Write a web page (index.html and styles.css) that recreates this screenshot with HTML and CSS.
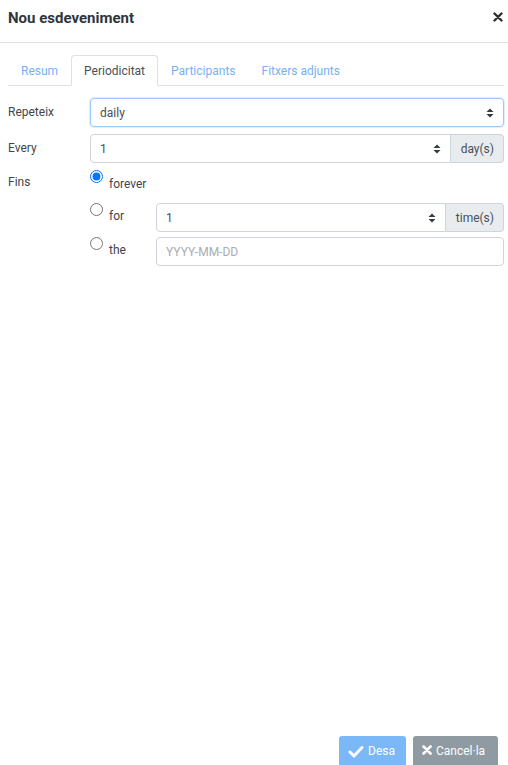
FILE: index.html
```html
<!DOCTYPE html>
<html lang="ca">
<head>
  <meta charset="UTF-8">
  <title>Nou esdeveniment</title>
  <link rel="stylesheet" href="styles.css">
</head>
<body>

<div class="modal">
  <!-- header -->
  <div class="modal-header">
    <h1>Nou esdeveniment</h1>
    <span class="close">
      <svg width="10" height="10" viewBox="0 0 10 10"><path d="M1.5 1.5 L8.5 8.5 M8.5 1.5 L1.5 8.5" stroke="#2b2f33" stroke-width="2.4" stroke-linecap="round"/></svg>
    </span>
  </div>

  <!-- body -->
  <div class="modal-body">
    <ul class="tabs">
      <li><a href="#">Resum</a></li>
      <li class="active"><a href="#">Periodicitat</a></li>
      <li><a href="#">Participants</a></li>
      <li><a href="#">Fitxers adjunts</a></li>
    </ul>

    <div class="form-row">
      <label class="col-label">Repeteix</label>
      <div class="col-field">
        <select class="select focus">
          <option>daily</option>
        </select>
      </div>
    </div>

    <div class="form-row">
      <label class="col-label">Every</label>
      <div class="col-field input-group">
        <select class="select">
          <option>1</option>
        </select>
        <span class="addon">day(s)</span>
      </div>
    </div>

    <div class="form-row">
      <label class="col-label fins">Fins</label>
      <div class="col-field">
        <div class="option first">
          <input type="radio" name="until" checked>
          <span class="opt-text">forever</span>
        </div>
        <div class="option">
          <input type="radio" name="until">
          <span class="opt-text short">for</span>
          <div class="input-group">
            <select class="select">
              <option>1</option>
            </select>
            <span class="addon">time(s)</span>
          </div>
        </div>
        <div class="option">
          <input type="radio" name="until">
          <span class="opt-text short">the</span>
          <input type="text" class="text-input" placeholder="YYYY-MM-DD">
        </div>
      </div>
    </div>
  </div>

  <!-- footer -->
  <div class="modal-footer">
    <button class="btn btn-primary">
      <svg width="16" height="13" viewBox="0 0 16 13"><path d="M2 7 L6 11 L14 2.5" fill="none" stroke="#fff" stroke-width="3" stroke-linejoin="round" stroke-linecap="round"/></svg>
      Desa
    </button>
    <button class="btn btn-secondary">
      <svg width="10" height="10" viewBox="0 0 10 10"><path d="M1.5 1.5 L8.5 8.5 M8.5 1.5 L1.5 8.5" stroke="#fff" stroke-width="2.6" stroke-linecap="round"/></svg>
      Cancel·la
    </button>
  </div>
</div>

</body>
</html>
```

FILE: styles.css
```css
* {
  box-sizing: border-box;
}
html, body {
  margin: 0;
  height: 100%;
}
body {
  font-family: Roboto, "Liberation Sans", sans-serif;
  font-size: 12px;
  color: #495057;
  background: #fff;
}
.modal {
  height: 100vh;
  display: flex;
  flex-direction: column;
  overflow: hidden;
}
.modal-header {
  height: 43px;
  padding: 0 5px 0 8px;
  display: flex;
  justify-content: space-between;
  align-items: center;
  border-bottom: 1px solid #dee2e6;
}
.modal-header h1 {
  margin: 0;
  font-size: 15px;
  font-weight: 700;
  color: #2f353b;
  position: relative;
  top: -3px;
}
.close {
  display: flex;
  position: relative;
  top: -4px;
}
.modal-body {
  flex: 1;
  padding: 12px 4px 0 8px;
}
.tabs {
  list-style: none;
  margin: 0 0 12px;
  padding: 0;
  display: flex;
  border-bottom: 1px solid #dee2e6;
}
.tabs li {
  margin-bottom: -1px;
}
.tabs a {
  display: block;
  height: 31px;
  line-height: 30px;
  padding: 0 12px;
  border: 1px solid transparent;
  border-radius: 4px 4px 0 0;
  color: #76b1f5;
  text-decoration: none;
}
.tabs .active a {
  color: #495057;
  background: #fff;
  border-color: #dee2e6 #dee2e6 #fff;
}
.form-row {
  display: flex;
  margin-bottom: 7px;
}
.col-label {
  width: 82px;
  flex-shrink: 0;
  line-height: 17px;
  padding-top: 6px;
  color: #3f454b;
}
.col-label.fins {
  padding-top: 4px;
}
.col-field {
  flex: 1;
}
.select, .text-input {
  display: block;
  width: 100%;
  height: 29px;
  padding: 0 9px;
  font-family: inherit;
  font-size: 12px;
  color: #495057;
  background: #fff url("data:image/svg+xml,%3Csvg xmlns='http://www.w3.org/2000/svg' width='8' height='10' viewBox='0 0 8 10'%3E%3Cpath d='M4 0.5 L7.5 4 L0.5 4 Z M4 9.5 L7.5 6 L0.5 6 Z' fill='%23343a40'/%3E%3C/svg%3E") no-repeat right 9px center;
  border: 1px solid #ced4da;
  border-radius: 4px;
  appearance: none;
  -webkit-appearance: none;
  outline: none;
}
.text-input {
  background-image: none;
}
.text-input::placeholder {
  color: #a9adb1;
}
.select.focus {
  border-color: #9dcaf8;
  box-shadow: 0 0 0 1px rgba(0, 123, 255, 0.12);
}
.input-group {
  display: flex;
  flex: 1;
}
.input-group .select {
  flex: 1;
  border-radius: 4px 0 0 4px;
}
.addon {
  display: flex;
  align-items: center;
  padding: 0 9px 0 10px;
  height: 29px;
  background: #e9ecef;
  border: 1px solid #ced4da;
  border-left: none;
  border-radius: 0 4px 4px 0;
  color: #495057;
}
.option {
  display: flex;
  align-items: flex-start;
  margin-bottom: 5px;
}
.option.first {
  margin-bottom: 10px;
  height: 23px;
}
.option input[type=radio] {
  margin: 0 6px 0 0;
  width: 13px;
  height: 13px;
  flex-shrink: 0;
}
.opt-text {
  padding-top: 6px;
  line-height: 17px;
  color: #3f454b;
}
.opt-text.short {
  width: 47px;
  flex-shrink: 0;
  padding-top: 5px;
}
.modal-footer {
  height: 29px;
  padding: 0 10px 0 0;
  display: flex;
  justify-content: flex-end;
  gap: 7px;
}
.btn {
  height: 32px;
  padding: 0 9px;
  display: flex;
  align-items: flex-start;
  padding-top: 8px;
  gap: 4px;
  border: none;
  border-radius: 3px;
  font-family: inherit;
  font-size: 12px;
  color: #fff;
  cursor: pointer;
}
.btn svg {
  margin-top: 1px;
}
.btn-primary {
  width: 67px;
  background: #7ab8f7;
}
.btn-secondary {
  width: 85px;
  background: #8f9aa3;
}
```
